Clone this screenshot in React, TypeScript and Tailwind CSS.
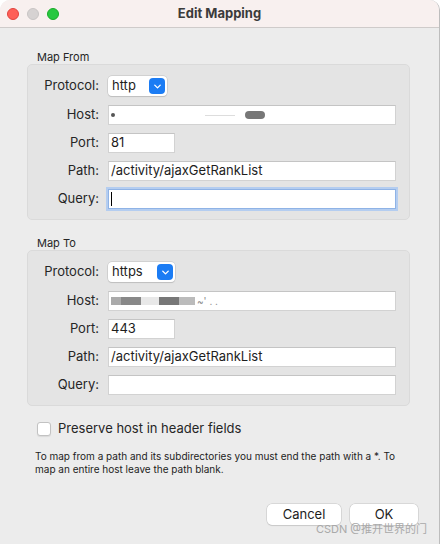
import { ChevronDown } from 'lucide-react';

const font = { fontFamily: 'Inter, "Noto Sans", "Noto Sans CJK SC", sans-serif' };

function Field({ value, width = 'w-[288px]', focused = false, blur }: { value?: string; width?: string; focused?: boolean; blur?: 'from' | 'to' }) {
  return (
    <div
      className={`relative flex h-[20px] items-center bg-white px-[2px] text-[13px] text-[#1d1d1d] ${width} ${
        focused
          ? 'border border-[#8fb3e6] shadow-[0_0_0_2px_#b4cdf0]'
          : 'border border-[#d2d2d2] border-t-[#c4c4c4]'
      }`}
    >
      {focused && <span className="h-[14px] w-px bg-black" />}
      {value}
      {blur === 'from' && (
        <div className="flex items-center gap-0">
          <span className="h-[4px] w-[4px] rounded-full bg-[#555]" />
          <span className="ml-[90px] h-[1px] w-[30px] bg-[#ddd]" />
          <span className="ml-[10px] h-[8px] w-[20px] rounded-sm bg-[#777]" />
        </div>
      )}
      {blur === 'to' && (
        <div className="flex items-center">
          <span className="h-[8px] w-[10px] bg-[#aaa]" />
          <span className="h-[8px] w-[20px] bg-[#888]" />
          <span className="h-[8px] w-[18px] bg-[#e8e8e8]" />
          <span className="h-[8px] w-[20px] bg-[#777]" />
          <span className="h-[8px] w-[16px] bg-[#bbb]" />
          <span className="ml-[2px] text-[10px] leading-none text-[#888]">~' . .</span>
        </div>
      )}
    </div>
  );
}

function Select({ value, width }: { value: string; width: string }) {
  return (
    <div
      className={`flex h-[20px] items-center justify-between rounded-[4px] bg-white pl-[4px] pr-[2px] text-[13px] text-[#1d1d1d] shadow-[0_0_0_0.5px_#bdbdbd,0_1px_1px_rgba(0,0,0,0.15)] ${width}`}
    >
      <span>{value}</span>
      <span className="flex h-[16px] w-[16px] items-center justify-center rounded-[4px] bg-[#1b7cf4]">
        <ChevronDown size={11} strokeWidth={3} className="text-white" />
      </span>
    </div>
  );
}

function Row({ label, children, gap = 'mt-[8px]' }: { label: string; children: React.ReactNode; gap?: string }) {
  return (
    <div className={`flex items-center ${gap}`}>
      <div className="w-[72px] pr-[1px] text-right text-[13px] text-[#262626]">{label}</div>
      <div className="ml-[8px]">{children}</div>
    </div>
  );
}

function Group({ title, children, className = '' }: { title: string; children: React.ReactNode; className?: string }) {
  return (
    <div className={className}>
      <div className="pl-[10px] text-[11px] leading-[14px] text-[#262626]">{title}</div>
      <div className="w-[383px] rounded-[5px] border border-[#dadada] bg-[#e4e4e4] pb-[10px] pt-[11px]">
        {children}
      </div>
    </div>
  );
}

export default function App() {
  return (
    <div className="h-[544px] w-[443px] bg-white" style={font}>
      <div className="relative flex h-[544px] w-[440px] flex-col overflow-hidden rounded-t-[10px] border-r border-[#bdbdbd] bg-[#ececec]">
        <div className="relative flex h-[28px] shrink-0 items-center justify-center border-b border-[#cfcbca] bg-[#f8f0ef]">
          <div className="absolute left-[7px] top-[8px] flex gap-[8px]">
            <span className="h-[12px] w-[12px] rounded-full border border-[#e0443e] bg-[#fe5f57]" />
            <span className="h-[12px] w-[12px] rounded-full border border-[#c8c4c4] bg-[#d6d2d2]" />
            <span className="h-[12px] w-[12px] rounded-full border border-[#1aab29] bg-[#28c840]" />
          </div>
          <span className="text-[13px] font-bold text-[#3b3b3b]">Edit Mapping</span>
        </div>

        <div className="pl-[27px]">
          <Group title="Map From" className="mt-[22px]">
            <Row label="Protocol:" gap="">
              <Select value="http" width="w-[59px]" />
            </Row>
            <Row label="Host:" gap="mt-[9px]">
              <Field blur="from" />
            </Row>
            <Row label="Port:">
              <Field value="81" width="w-[67px]" />
            </Row>
            <Row label="Path:">
              <Field value="/activity/ajaxGetRankList" />
            </Row>
            <Row label="Query:">
              <Field focused />
            </Row>
          </Group>

          <Group title="Map To" className="mt-[16px]">
            <Row label="Protocol:" gap="">
              <Select value="https" width="w-[67px]" />
            </Row>
            <Row label="Host:" gap="mt-[9px]">
              <Field blur="to" />
            </Row>
            <Row label="Port:">
              <Field value="443" width="w-[67px]" />
            </Row>
            <Row label="Path:">
              <Field value="/activity/ajaxGetRankList" />
            </Row>
            <Row label="Query:">
              <Field />
            </Row>
          </Group>

          <label className="mt-[13px] flex items-center gap-[7px] pl-[10px]">
            <span className="h-[14px] w-[14px] rounded-[3px] border border-[#c2c2c2] bg-white shadow-[0_1px_1px_rgba(0,0,0,0.08)]" />
            <span className="text-[13px] text-[#262626]">Preserve host in header fields</span>
          </label>

          <p className="mt-[11px] w-[380px] pl-[8px] text-[10px] leading-[13px] text-[#1d1d1d]">
            To map from a path and its subdirectories you must end the path with a *. To map an entire host leave the path blank.
          </p>
        </div>

        <div className="mt-auto flex justify-end gap-[9px] pb-[19px] pr-[21px]">
          <button className="h-[21px] w-[74px] rounded-[5px] bg-white text-[13px] text-[#1d1d1d] shadow-[0_0_0_0.5px_#c4c4c4,0_1px_1px_rgba(0,0,0,0.12)]">
            Cancel
          </button>
          <button className="h-[21px] w-[68px] rounded-[5px] bg-white text-[13px] text-[#1d1d1d] shadow-[0_0_0_0.5px_#c4c4c4,0_1px_1px_rgba(0,0,0,0.12)]">
            OK
          </button>
        </div>
        <div className="absolute bottom-[9px] right-[12px] text-[11px] leading-none text-[#a9a9a9]">CSDN @推开世界的门</div>
      </div>
    </div>
  );
}
